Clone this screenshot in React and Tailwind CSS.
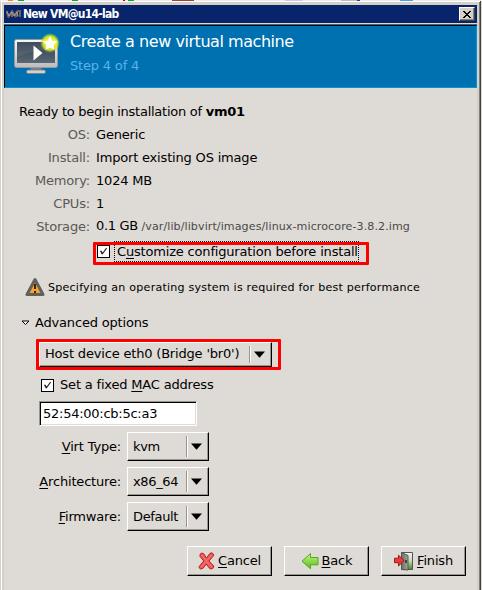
import React from "react";

const SANS = "font-['DejaVu_Sans',sans-serif]";

function Fact({ label, children }) {
  return (
    <div className="flex h-[23px] items-center whitespace-nowrap">
      <span className="w-[71px] shrink-0 text-right text-[#5a5956]">{label}</span>
      <span className="ml-[6px]">{children}</span>
    </div>
  );
}

function Tick({ className = "" }) {
  return (
    <span className={`flex size-[13px] shrink-0 items-center justify-center border border-black bg-white ${className}`}>
      <svg width="11" height="11" viewBox="0 0 11 11" fill="none">
        <path d="M2 5.2h1.2L4.6 7.6 8.6 2.2" stroke="#222" strokeWidth="1.1" />
        <path d="M3 6.2l1.5 2" stroke="#222" strokeWidth="1.2" />
      </svg>
    </span>
  );
}

function Combo({ className, textClass = "", children }) {
  return (
    <div className={`flex items-center border border-t-white border-l-white border-r-black border-b-black bg-[#dedad5] shadow-[inset_-1px_-1px_0_#98958f] ${className}`}>
      <span className={`flex-1 whitespace-nowrap pl-[5px] ${textClass}`}>{children}</span>
      <span className="my-[3px] w-[2px] self-stretch border-l border-l-[#98958f] bg-white" />
      <svg className="ml-[3px] mr-[6px] shrink-0" width="11" height="7" viewBox="0 0 11 7">
        <path d="M0 .5h11L5.5 6.8z" fill="#000" />
      </svg>
    </div>
  );
}

function Option({ label, children }) {
  return (
    <div className="flex h-[29px] items-center">
      <span className="w-[117px] text-right">{label}</span>
      <Combo className="ml-[6px] h-[29px] w-[82px]" textClass="tracking-[-0.35px]">{children}</Combo>
    </div>
  );
}

function Action({ icon, children }) {
  return (
    <button className="flex h-[30px] w-[85px] items-center justify-center gap-[3px] border border-t-white border-l-white border-r-black border-b-black bg-[#dedad5] shadow-[inset_-1px_-1px_0_#98958f]">
      {icon}
      <span className="-mt-px">{children}</span>
    </button>
  );
}

const U = ({ children }) => <span className="underline decoration-1 underline-offset-2">{children}</span>;

const CancelIcon = (
  <svg width="17" height="18" viewBox="0 0 17 18">
    <path d="M2 2.3Q4 .2 5.6 1.6L8.5 6l3.3-4.5Q14-.2 15.3 2 16 3 15 4.3L11 9l4.7 5Q16 16 14 16.8q-2 .5-3-1L8.2 12 5 16.3Q2.5 18 1.2 15.9.8 14.5 2 13.4L5.8 9 2 4.5z" fill="#ef5959" stroke="#b62020" />
    <path d="M3.5 3l5 6 5-6M3 15l5-5.5 6 5.5" fill="none" stroke="#f27a7a" />
  </svg>
);

const BackIcon = (
  <svg width="18" height="18" viewBox="0 0 18 18">
    <defs>
      <linearGradient id="arrow" x2="0" y2="1">
        <stop stopColor="#c3f487" />
        <stop offset="1" stopColor="#58bb18" />
      </linearGradient>
    </defs>
    <path d="M1 9.2L9.5 1.5v4H17v7.3H9.5v4z" fill="url(#arrow)" stroke="#51ab1c" strokeLinejoin="round" />
  </svg>
);

const FinishIcon = (
  <svg width="20" height="20" viewBox="0 0 20 20">
    <defs>
      <linearGradient id="grass" x2="0" y2="1">
        <stop stopColor="#f2f4ee" />
        <stop offset=".5" stopColor="#c4d8b5" />
        <stop offset="1" stopColor="#3f8c1d" />
      </linearGradient>
      <linearGradient id="door">
        <stop stopColor="#6b6e69" />
        <stop offset="1" stopColor="#a3a5a1" />
      </linearGradient>
    </defs>
    <path d="M7.5 1.5h11v17h-11z" fill="url(#grass)" stroke="#555753" />
    <path d="M7.5 1.5l6.5 3v14.5l-6.5-.5z" fill="url(#door)" stroke="#555753" />
    <path d="M12 9v3" stroke="#222" strokeWidth="1.4" />
    <path d="M.5 7.2h4v-3l5.6 5.4L4.5 15v-3.3h-4z" fill="#e43b3b" stroke="#a41818" strokeLinejoin="round" />
  </svg>
);

const Monitor = () => (
  <svg width="48" height="43" viewBox="0 0 48 43">
    <defs>
      <linearGradient id="screen" x2="0" y2="1">
        <stop stopColor="#303e51" />
        <stop offset="1" stopColor="#596873" />
      </linearGradient>
      <linearGradient id="frame" x2="0" y2="1">
        <stop stopColor="#f7f7f7" />
        <stop offset="1" stopColor="#bcbcbc" />
      </linearGradient>
      <radialGradient id="glow">
        <stop offset=".3" stopColor="#f6fa45" />
        <stop offset=".7" stopColor="#e0ed18" stopOpacity=".9" />
        <stop offset="1" stopColor="#9ccd37" stopOpacity="0" />
      </radialGradient>
    </defs>
    <path d="M17 34h10l1 4H16z" fill="#7e8387" />
    <rect x="12.5" y="37" width="19" height="3.5" rx="1.5" fill="#d2d2d2" stroke="#777" strokeWidth=".7" />
    <rect x=".5" y="6.5" width="43" height="28" rx="2" fill="url(#frame)" stroke="#969a9d" />
    <rect x="3" y="9" width="38" height="21" fill="url(#screen)" />
    <path d="M3 9h38v7Q23 16 3 24z" fill="#fff" opacity=".08" />
    <path d="M19.5 12.5l9 7.5-9 7.5z" fill="#fff" />
    <circle cx="36" cy="10" r="10" fill="url(#glow)" />
    <path d="M36 3l2.1 4.7 5.2.6-3.8 3.6 1 5.2-4.5-2.6-4.6 2.6 1-5.2-3.8-3.6 5.2-.6z" fill="#fff" />
  </svg>
);

export default function App() {
  return (
    <div className={`relative h-[590px] w-[482px] overflow-hidden bg-[#dedad5] text-[13px] leading-[18px] tracking-[-0.18px] text-black ${SANS}`}>
      <div className="flex h-px bg-[#f0eeee]">
        <i className="ml-2 w-[5px] bg-orange-400" /><i className="ml-[5px] w-[6px] bg-green-600" />
        <i className="ml-[48px] w-[6px] bg-green-600" /><i className="ml-[45px] w-[2px] bg-red-700" />
        <i className="ml-[3px] w-[6px] bg-green-600" /><i className="ml-[38px] w-[22px] bg-[#9d4238]" />
        <i className="ml-[91px] w-[18px] bg-[#cbcaf0]" /><i className="ml-[38px] w-[16px] bg-[#bdbdbd]" />
        <i className="w-[3px] bg-blue-800" /><i className="ml-[40px] w-[13px] bg-[#4d9de8]" />
      </div>
      <div className="flex h-[589px] flex-col border-l border-l-[#d4d0c8] border-r border-r-[#404040] bg-[#d4d0c8] pl-[3px] pr-[3px] shadow-[inset_1px_1px_0_#fff,inset_-1px_0_0_#808080] mr-px">
        <header className="mt-[4px] flex h-[18px] shrink-0 items-center bg-[#08246b] pl-[2px] pr-[2px]">
          <svg width="15" height="8" viewBox="0 0 15 8" fill="none">
            <path d="M0 1l2.5 6L6 1v6m0-6l3 5 2-5v6m0-6h3v6" stroke="#6f6262" strokeWidth="2" />
            <path d="M1 1l2 5 3-4 2 4 3-4 1 4" stroke="#b8b2b0" strokeWidth=".8" />
          </svg>
          <h1 className="ml-[2px] flex-1 whitespace-nowrap font-['DejaVu_Sans_Condensed','DejaVu_Sans',sans-serif] text-[12px] font-bold leading-[18px] tracking-[-0.75px] text-white">New VM@u14-lab</h1>
          <button className="flex h-[14px] w-[16px] items-center justify-center border border-t-white border-l-white border-r-[#404040] border-b-[#404040] bg-[#d4d0c8] shadow-[inset_-1px_-1px_0_#808080]">
            <svg width="8" height="7" viewBox="0 0 8 7" shapeRendering="crispEdges">
              <path d="M.5 0l7 7M7.5 0l-7 7" stroke="#000" strokeWidth="1.6" />
            </svg>
          </button>
        </header>
        <div className="h-[2px] shrink-0 border-t border-t-[#dedad5] bg-[#2d6c88]" />
        <section className="flex h-[63px] shrink-0 border border-t-black border-l-black border-r-[#0095d9] border-b-[#0095d9] bg-[#0071b0] pl-[9px]">
          <div className="mt-[7px]"><Monitor /></div>
          <div className="ml-[8px] mt-[6px]">
            <h2 className="whitespace-nowrap text-[16px] leading-[20px] tracking-[-0.45px] text-white">Create a new virtual machine</h2>
            <p className="mt-[5px] leading-[18px] text-[#59b3eb]">Step 4 of 4</p>
          </div>
        </section>
        <main className="flex flex-1 flex-col bg-[#dedad5] pl-[15px]">
          <p className="mt-[12px] h-[23px] leading-[23px] tracking-[-0.26px]">Ready to begin installation of <b>vm01</b></p>
          <Fact label="OS:">Generic</Fact>
          <Fact label="Install:">Import existing OS image</Fact>
          <Fact label="Memory:">1024 MB</Fact>
          <Fact label="CPUs:">1</Fact>
          <Fact label="Storage:"><span className="tracking-[-0.35px]">0.1 GB </span><span className="text-[11.1px] tracking-[0.08px] text-[#4b4a48]">/var/lib/libvirt/images/linux-microcore-3.8.2.img</span></Fact>
          <div className="relative ml-[74px] mt-[4px] flex h-[23px] w-[276px] items-center pl-[4px]">
            <Tick className="-translate-y-[2px]" />
            <span className="ml-[4px] h-[21px] w-[245px] shrink-0 -translate-y-[2px] border border-dotted border-black pl-[2px] leading-[19px] whitespace-nowrap">C<U>u</U>stomize configuration before install</span>
            <i className="absolute inset-0 rounded-[1px] border-[3px] border-[#f00]" />
          </div>
          <div className="mt-[12px] flex h-[20px] items-center gap-[3px] pl-[6px] text-[11.1px] tracking-[0.21px]">
            <svg width="20" height="20" viewBox="0 0 20 20">
              <path d="M10 2.5L2 17.5h16z" fill="#f6a332" stroke="#60615d" strokeWidth="3" strokeLinejoin="round" />
              <path d="M10 7v5m0 2v2" stroke="#432505" strokeWidth="2" />
            </svg>
            <span className="mt-[2px] whitespace-nowrap">Specifying an operating system is required for best performance</span>
          </div>
          <div className="mt-[17px] flex h-[18px] items-center gap-[5px] pl-[2px]">
            <svg width="9" height="6" viewBox="0 0 9 6"><path d="M1 1h7L4.5 4.5z" fill="#fff" stroke="#000" /></svg>
            <span>Advanced options</span>
          </div>
          <div className="ml-[17px] mt-[7px] flex h-[31px] w-[245px] rounded-[1px] border-[3px] border-[#f00]">
            <Combo className="h-[25px] w-[233px]" textClass="pb-[2px]">Host device eth0 (Bridge 'br0')</Combo>
          </div>
          <div className="mt-[6px] flex h-[18px] items-center gap-[6px] pl-[22px]">
            <Tick /><span>Set a fixed <U>M</U>AC address</span>
          </div>
          <div className="ml-[20px] mt-[7px] flex h-[25px] w-[158px] items-center border border-t-[#98958f] border-l-[#98958f] border-r-white border-b-white bg-white pl-[3px] tracking-[-0.26px] shadow-[inset_1px_1px_0_#000,inset_-1px_-1px_0_#dedad5]">52:54:00:cb:5c:a3</div>
          <div className="-ml-[15px] mt-[6px] flex flex-col gap-[6px]">
            <Option label={<><U>V</U>irt Type:</>}>kvm</Option>
            <Option label={<><U>A</U>rchitecture:</>}>x86_64</Option>
            <Option label={<><U>F</U>irmware:</>}>Default</Option>
          </div>
          <footer className="-ml-[15px] mt-[15px] flex gap-[12px] pl-[183px]">
            <Action icon={CancelIcon}><U>C</U>ancel</Action>
            <Action icon={BackIcon}><U>B</U>ack</Action>
            <Action icon={FinishIcon}><U>F</U>inish</Action>
          </footer>
        </main>
      </div>
    </div>
  );
}
